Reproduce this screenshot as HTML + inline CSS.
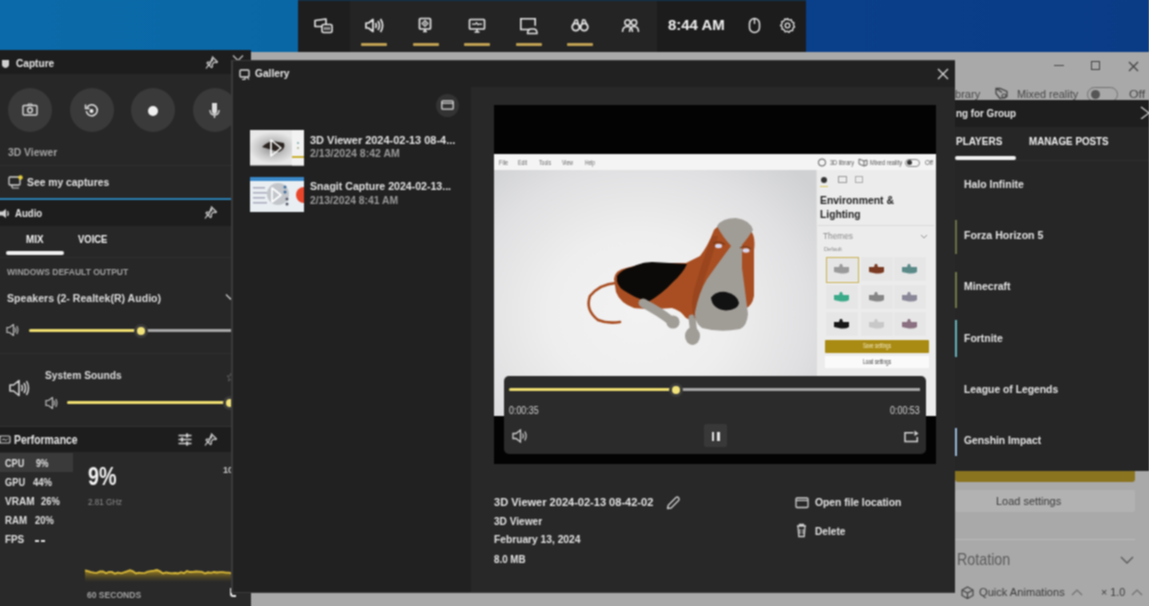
<!DOCTYPE html>
<html><head><meta charset="utf-8"><style>
html,body{margin:0;padding:0;}
body{width:1149px;height:606px;overflow:hidden;position:relative;background:#a9a9a9;font-family:"Liberation Sans",sans-serif;}
.r{position:absolute;}
.t{position:absolute;white-space:nowrap;line-height:1;transform-origin:0 0;}
#root{position:absolute;left:0;top:0;width:1149px;height:606px;filter:url(#bl);}
</style></head><body><svg width="0" height="0" style="position:absolute"><filter id="bl" x="0" y="0" width="100%" height="100%"><feConvolveMatrix order="3" kernelMatrix="1 2 1 2 4 2 1 2 1" edgeMode="duplicate" color-interpolation-filters="sRGB"/></filter></svg><div id="root">
<div class="r" style="left:0px;top:0px;width:1149px;height:52px;background:linear-gradient(90deg,#0b6aa9 0%,#0a67a6 26%,#0a3f8a 70%,#0a3c86 100%);"></div>
<div class="r" style="left:248px;top:52px;width:901px;height:554px;background:#a9a9a9;"></div>
<div class="r" style="left:248px;top:585px;width:3px;height:21px;background:#3f8c9c;"></div>
<div class="r" style="left:1053.5px;top:65.3px;width:10px;height:1.2px;background:#484848;"></div>
<div class="r" style="left:1091px;top:61.3px;width:9px;height:9px;background:transparent;border:1.2px solid #444;box-sizing:border-box;"></div>
<svg class="r" style="left:1127.5px;top:60.5px;" width="11" height="11" viewBox="0 0 11 11"><path d="M1 1L10 10M10 1L1 10" stroke="#404040" stroke-width="1.2"/></svg>
<div class="t" style="left:955.40px;top:90.04px;font-size:10.47px;font-weight:400;color:#464646;transform:scaleX(1.057)">brary</div>
<svg class="r" style="left:994px;top:87px;" width="16" height="14" viewBox="0 0 16 14"><path d="M2 1.5l6 4M2 1.5v5l4 5 7-2v-5l-7-3z" fill="none" stroke="#444" stroke-width="1.3"/><circle cx="10" cy="9" r="2" fill="none" stroke="#444" stroke-width="1.1"/></svg>
<div class="t" style="left:1017.10px;top:89.43px;font-size:11.19px;font-weight:400;color:#464646;transform:scaleX(0.974)">Mixed reality</div>
<div class="r" style="left:1087px;top:87px;width:31px;height:15px;background:transparent;border:1.3px solid #707070;border-radius:8px;box-sizing:border-box;"></div>
<div class="r" style="left:1091px;top:90px;width:9px;height:9px;background:#555;border-radius:50%;"></div>
<div class="t" style="left:1128.90px;top:89.43px;font-size:11.19px;font-weight:400;color:#464646;transform:scaleX(1.100)">Off</div>
<div class="r" style="left:298px;top:0px;width:508px;height:52px;background:#242424;"></div>
<div class="r" style="left:298px;top:0px;width:52px;height:52px;background:#1e1e1e;"></div>
<div class="r" style="left:657px;top:0px;width:149px;height:52px;background:#1c1c1c;"></div>
<div class="r" style="left:298px;top:0px;width:508px;height:1px;background:#13304a;"></div>
<div class="r" style="left:361.3px;top:43px;width:26px;height:3px;background:#bfa052;border-radius:1px;"></div>
<div class="r" style="left:412.5px;top:43px;width:26px;height:3px;background:#bfa052;border-radius:1px;"></div>
<div class="r" style="left:464px;top:43px;width:26px;height:3px;background:#bfa052;border-radius:1px;"></div>
<div class="r" style="left:515.6px;top:43px;width:26px;height:3px;background:#bfa052;border-radius:1px;"></div>
<div class="r" style="left:567px;top:43px;width:26px;height:3px;background:#bfa052;border-radius:1px;"></div>
<svg class="r" style="left:313px;top:17px;" width="21" height="18" viewBox="0 0 21 18"><path d="M2 3.5l11-1.5v7.5H2z" fill="none" stroke="#e4e4e4" stroke-width="1.6" stroke-linejoin="round"/><rect x="9" y="7.5" width="10" height="8" rx="1.5" fill="#1e1e1e" stroke="#e4e4e4" stroke-width="1.6"/><path d="M11.8 10v3M14 10v3M16.2 10v3" stroke="#e4e4e4" stroke-width="1.2"/></svg>
<svg class="r" style="left:364px;top:17px;" width="21" height="17" viewBox="0 0 21 17"><path d="M2 6h2.5l4.5-3.5v12L4.5 11H2z" fill="none" stroke="#e4e4e4" stroke-width="1.7" stroke-linejoin="round"/><path d="M11.5 6q1.5 2.5 0 5M14 4q2.8 4.5 0 9M16.5 2q4.2 6.5 0 13" fill="none" stroke="#e4e4e4" stroke-width="1.7"/></svg>
<svg class="r" style="left:418px;top:17px;" width="15" height="16" viewBox="0 0 15 16"><rect x="1.5" y="1.5" width="11" height="10.5" rx="1" fill="none" stroke="#e4e4e4" stroke-width="1.7"/><path d="M7 3.5l3 3-3 3-3-3z" fill="none" stroke="#e4e4e4" stroke-width="1.1"/><circle cx="7" cy="6.5" r="1" fill="#e4e4e4"/><path d="M5 14.5h4M7 12v2.5" stroke="#e4e4e4" stroke-width="1.6"/></svg>
<svg class="r" style="left:468px;top:18px;" width="18" height="15" viewBox="0 0 18 15"><rect x="1.5" y="1.5" width="15" height="9.5" rx="0.8" fill="none" stroke="#e4e4e4" stroke-width="1.6"/><path d="M4 6.2h3.5l1-1.5 1.5 2 1-0.5h3" fill="none" stroke="#e4e4e4" stroke-width="1.2"/><path d="M6.5 14h5M9 11v3" stroke="#e4e4e4" stroke-width="1.5"/></svg>
<svg class="r" style="left:519px;top:17px;" width="19" height="18" viewBox="0 0 19 18"><path d="M11 12.5H1.8V1.8h14.4v7" fill="none" stroke="#e4e4e4" stroke-width="1.6"/><path d="M8.5 16.5q0-4.5 4-4.5h2q3.5 0 3.5 4.5z" fill="none" stroke="#e4e4e4" stroke-width="1.5"/></svg>
<svg class="r" style="left:571px;top:18px;" width="18" height="14" viewBox="0 0 18 14"><circle cx="4.8" cy="9" r="3.6" fill="none" stroke="#e4e4e4" stroke-width="1.8"/><circle cx="13.2" cy="9" r="3.6" fill="none" stroke="#e4e4e4" stroke-width="1.8"/><path d="M1.8 7.5l2.5-5.5h2l1 5M16.2 7.5l-2.5-5.5h-2l-1 5M7.5 8.5h3" fill="none" stroke="#e4e4e4" stroke-width="1.5"/></svg>
<svg class="r" style="left:621px;top:18px;" width="19" height="15" viewBox="0 0 19 15"><circle cx="6.5" cy="4.5" r="2.7" fill="none" stroke="#e4e4e4" stroke-width="1.5"/><circle cx="13" cy="4.5" r="2.7" fill="none" stroke="#e4e4e4" stroke-width="1.5"/><path d="M1.5 14q0-5.5 5-5.5t5 5.5M8.5 14q0-5.5 4.5-5.5t4.5 5.5" fill="none" stroke="#e4e4e4" stroke-width="1.5"/></svg>
<div class="t" style="left:668.20px;top:17.95px;font-size:14.83px;font-weight:700;color:#f0f0f0;transform:scaleX(1.009)">8:44 AM</div>
<svg class="r" style="left:748px;top:17px;" width="13" height="17" viewBox="0 0 13 17"><rect x="1.5" y="1.5" width="10" height="14" rx="5" fill="none" stroke="#e4e4e4" stroke-width="1.5"/><path d="M6.5 2v5" stroke="#e4e4e4" stroke-width="1.3"/></svg>
<svg class="r" style="left:779px;top:17px;" width="17" height="17" viewBox="0 0 17 17"><path d="M8.5 1.5l1.6 1.6 2.2-.4.6 2.2 2.1.9-.6 2.2 1.2 1.9-1.8 1.3-.1 2.3-2.3.1-1.3 1.8-1.9-1.2-2.2.6-.9-2.1-2.2-.6.4-2.2L1.5 8.5l1.6-1.6-.4-2.2 2.2-.6.9-2.1 2.2.6z" fill="none" stroke="#e4e4e4" stroke-width="1.3" stroke-linejoin="round"/><circle cx="8.5" cy="8.5" r="2.3" fill="none" stroke="#e4e4e4" stroke-width="1.3"/></svg>
<div class="r" style="left:0px;top:50px;width:251px;height:24px;background:#1d1d1d;"></div>
<div class="r" style="left:0px;top:74px;width:251px;height:125px;background:#272727;"></div>
<svg class="r" style="left:1px;top:58.5px;" width="9" height="9" viewBox="0 0 9 9"><path d="M1 1h7v4.5q0 2.5-3.5 3.5q-3.5-1-3.5-3.5z" fill="#cfcfcf"/></svg>
<div class="t" style="left:16.00px;top:56.76px;font-size:11.63px;font-weight:700;color:#e6e6e6;transform:scaleX(0.870)">Capture</div>
<svg class="r" style="left:205px;top:55px;" width="14" height="15" viewBox="0 0 14 15"><path d="M7 1.5l5.5 5.5-1.2.6-1.8-.6-2.3 2.3.3 2.4-1 1-2.8-2.8L1 13.5M4.5 10.5L2 8l1-1 2.4.3L7.7 5 7.1 3.2z" fill="none" stroke="#cfcfcf" stroke-width="1.2" stroke-linejoin="round"/></svg>
<svg class="r" style="left:232px;top:54px;" width="12" height="9" viewBox="0 0 12 9"><path d="M1 1.5l5 5 5-5" fill="none" stroke="#bbb" stroke-width="1.3"/></svg>
<div class="r" style="left:8px;top:88px;width:44px;height:44px;background:#3a3a3a;border-radius:50%;"></div>
<div class="r" style="left:69.5px;top:88px;width:44px;height:44px;background:#3a3a3a;border-radius:50%;"></div>
<div class="r" style="left:131px;top:88px;width:44px;height:44px;background:#3a3a3a;border-radius:50%;"></div>
<div class="r" style="left:193px;top:88px;width:44px;height:44px;background:#3a3a3a;border-radius:50%;"></div>
<svg class="r" style="left:22px;top:103px;" width="16" height="13" viewBox="0 0 16 13"><rect x="1" y="2.5" width="14" height="9.5" rx="1" fill="none" stroke="#d8d8d8" stroke-width="1.4"/><circle cx="8" cy="7.2" r="2.4" fill="none" stroke="#d8d8d8" stroke-width="1.4"/><path d="M5.5 2.5l1-1.5h3l1 1.5" fill="none" stroke="#d8d8d8" stroke-width="1.2"/></svg>
<svg class="r" style="left:84px;top:103px;" width="15" height="15" viewBox="0 0 15 15"><path d="M3 4.5A5.5 5.5 0 1 1 2.3 8" fill="none" stroke="#e0e0e0" stroke-width="1.5"/><path d="M1.5 1.5v4h4" fill="none" stroke="#e0e0e0" stroke-width="1.4"/><circle cx="7.5" cy="8" r="2" fill="#eee"/></svg>
<div class="r" style="left:148px;top:105.5px;width:10px;height:10px;background:#f0f0f0;border-radius:50%;"></div>
<svg class="r" style="left:208px;top:101px;" width="13" height="18" viewBox="0 0 13 18"><path d="M4 2h5v8q0 3-2.5 3T4 10z" fill="#dcdcdc"/><path d="M2 9q0 5 4.5 5T11 9M6.5 14v3" fill="none" stroke="#dcdcdc" stroke-width="1.3"/></svg>
<div class="t" style="left:7.70px;top:148.44px;font-size:10.47px;font-weight:700;color:#a4a4a4;transform:scaleX(0.987)">3D Viewer</div>
<div class="r" style="left:0px;top:165px;width:251px;height:1px;background:#2f2f2f;"></div>
<svg class="r" style="left:8px;top:175px;" width="15" height="14" viewBox="0 0 15 14"><rect x="1" y="2" width="11" height="8" rx="1" fill="none" stroke="#d0d0d0" stroke-width="1.3"/><path d="M4 13h7M4 10v3" stroke="#d0d0d0" stroke-width="1.2"/><circle cx="12.5" cy="2.5" r="2.2" fill="#e8d040"/></svg>
<div class="t" style="left:27.10px;top:176.16px;font-size:11.63px;font-weight:700;color:#e0e0e0;transform:scaleX(0.889)">See my captures</div>
<div class="r" style="left:0px;top:197.5px;width:251px;height:2.8px;background:#2a7fb2;"></div>
<div class="r" style="left:0px;top:200px;width:251px;height:26px;background:#1d1d1d;"></div>
<div class="r" style="left:0px;top:226px;width:251px;height:201px;background:#272727;"></div>
<svg class="r" style="left:0px;top:209px;" width="11" height="9" viewBox="0 0 11 9"><path d="M0 2.5h2.5l3.5-2.5v9l-3.5-2.5H0z" fill="#cfcfcf"/><path d="M7.5 2q1.5 2.5 0 5" fill="none" stroke="#cfcfcf" stroke-width="1.3"/></svg>
<div class="t" style="left:15.30px;top:207.95px;font-size:11.05px;font-weight:700;color:#e6e6e6;transform:scaleX(0.869)">Audio</div>
<svg class="r" style="left:204px;top:205px;" width="14" height="15" viewBox="0 0 14 15"><path d="M7 1.5l5.5 5.5-1.2.6-1.8-.6-2.3 2.3.3 2.4-1 1-2.8-2.8L1 13.5M4.5 10.5L2 8l1-1 2.4.3L7.7 5 7.1 3.2z" fill="none" stroke="#cfcfcf" stroke-width="1.2" stroke-linejoin="round"/></svg>
<div class="r" style="left:232px;top:209px;width:2px;height:2px;background:#888;"></div>
<div class="r" style="left:232px;top:215px;width:2px;height:2px;background:#888;"></div>
<div class="t" style="left:25.70px;top:233.60px;font-size:11.34px;font-weight:700;color:#f2f2f2;transform:scaleX(0.868)">MIX</div>
<div class="t" style="left:78.20px;top:233.60px;font-size:11.34px;font-weight:700;color:#f2f2f2;transform:scaleX(0.833)">VOICE</div>
<div class="r" style="left:6px;top:251px;width:58px;height:3.5px;background:#f0f0f0;border-radius:2px;"></div>
<div class="r" style="left:0px;top:257px;width:251px;height:1px;background:#2e2e2e;"></div>
<div class="t" style="left:7.00px;top:267.73px;font-size:9.30px;font-weight:700;color:#a0a0a0;transform:scaleX(0.914)">WINDOWS DEFAULT OUTPUT</div>
<div class="t" style="left:7.40px;top:292.60px;font-size:11.34px;font-weight:700;color:#dcdcdc;transform:scaleX(0.933)">Speakers (2- Realtek(R) Audio)</div>
<svg class="r" style="left:225px;top:293px;" width="11" height="8" viewBox="0 0 11 8"><path d="M1 1.5l4.5 4.5 4.5-4.5" fill="none" stroke="#c8c8c8" stroke-width="1.3"/></svg>
<svg class="r" style="left:6px;top:324px;" width="13" height="12" viewBox="0 0 13 12"><path d="M1 3.5h2.5l4-3v11l-4-3H1z" fill="none" stroke="#bdbdbd" stroke-width="1.2"/><path d="M9 3.5q1.3 2.5 0 5M10.8 2q2.2 4 0 8" fill="none" stroke="#bdbdbd" stroke-width="1.1"/></svg>
<div class="r" style="left:29px;top:329px;width:111px;height:3px;background:#ecdc70;border-radius:1.5px;"></div>
<div class="r" style="left:141px;top:329px;width:92px;height:3px;background:#a6a6a6;"></div>
<div class="r" style="left:133.5px;top:323.5px;width:14px;height:14px;background:#3b3b3b;border-radius:50%;"></div>
<div class="r" style="left:136.5px;top:326.5px;width:8px;height:8px;background:#f2e27a;border-radius:50%;"></div>
<div class="r" style="left:0px;top:352.5px;width:251px;height:1px;background:#2f2f2f;"></div>
<svg class="r" style="left:8px;top:378px;" width="22" height="20" viewBox="0 0 22 20"><path d="M2 7h3.5l5.5-4.5v15L5.5 13H2z" fill="none" stroke="#d4d4d4" stroke-width="1.6" stroke-linejoin="round"/><path d="M13.5 7q1.8 3 0 6M16 5q3 5 0 10M18.5 3q4 7 0 14" fill="none" stroke="#d4d4d4" stroke-width="1.5"/></svg>
<div class="t" style="left:45.40px;top:370.40px;font-size:11.34px;font-weight:700;color:#dcdcdc;transform:scaleX(0.902)">System Sounds</div>
<svg class="r" style="left:45px;top:397px;" width="13" height="12" viewBox="0 0 13 12"><path d="M1 3.5h2.5l4-3v11l-4-3H1z" fill="none" stroke="#bdbdbd" stroke-width="1.2"/><path d="M9 3.5q1.3 2.5 0 5M10.8 2q2.2 4 0 8" fill="none" stroke="#bdbdbd" stroke-width="1.1"/></svg>
<div class="r" style="left:67px;top:401.3px;width:162px;height:3px;background:#ecdc70;border-radius:1.5px;"></div>
<div class="r" style="left:222.5px;top:395.5px;width:14px;height:14px;background:#3b3b3b;border-radius:50%;"></div>
<div class="r" style="left:225.5px;top:398.5px;width:8px;height:8px;background:#f2e27a;border-radius:50%;"></div>
<svg class="r" style="left:227px;top:373px;" width="8" height="9" viewBox="0 0 8 9"><path d="M4 0l1.2 3h3l-2.5 2 1 3L4 6.3 1.3 8l1-3L0 3h3z" fill="none" stroke="#666" stroke-width="0.8"/></svg>
<div class="r" style="left:0px;top:426px;width:251px;height:1px;background:#333;"></div>
<div class="r" style="left:0px;top:427px;width:251px;height:25px;background:#1d1d1d;"></div>
<div class="r" style="left:0px;top:452px;width:251px;height:154px;background:#292929;"></div>
<svg class="r" style="left:0px;top:435px;" width="11" height="10" viewBox="0 0 11 10"><rect x="0" y="1" width="10" height="7" rx="1" fill="none" stroke="#cfcfcf" stroke-width="1.2"/><path d="M2 5l2-1 2 1.5 2-2" fill="none" stroke="#cfcfcf" stroke-width="1"/></svg>
<div class="t" style="left:14.00px;top:435.01px;font-size:11.92px;font-weight:700;color:#e6e6e6;transform:scaleX(0.873)">Performance</div>
<svg class="r" style="left:178px;top:433px;" width="14" height="13" viewBox="0 0 14 13"><path d="M0.5 2.5h13M0.5 6.5h13M0.5 10.5h13" stroke="#d0d0d0" stroke-width="1.3"/><rect x="8" y="0.5" width="2.2" height="4" fill="#d0d0d0"/><rect x="3" y="4.5" width="2.2" height="4" fill="#d0d0d0"/><rect x="8" y="8.5" width="2.2" height="4" fill="#d0d0d0"/></svg>
<svg class="r" style="left:204px;top:432px;" width="14" height="15" viewBox="0 0 14 15"><path d="M7 1.5l5.5 5.5-1.2.6-1.8-.6-2.3 2.3.3 2.4-1 1-2.8-2.8L1 13.5M4.5 10.5L2 8l1-1 2.4.3L7.7 5 7.1 3.2z" fill="none" stroke="#cfcfcf" stroke-width="1.2" stroke-linejoin="round"/></svg>
<div class="r" style="left:0px;top:452.6px;width:73px;height:19px;background:#3a3a3a;"></div>
<div class="t" style="left:5.10px;top:458.64px;font-size:10.47px;font-weight:700;color:#e0e0e0;transform:scaleX(0.869)">CPU</div>
<div class="t" style="left:35.50px;top:458.64px;font-size:10.47px;font-weight:700;color:#e0e0e0;transform:scaleX(0.826)">9%</div>
<div class="t" style="left:5.10px;top:477.54px;font-size:10.47px;font-weight:700;color:#e0e0e0;transform:scaleX(0.886)">GPU</div>
<div class="t" style="left:32.70px;top:477.54px;font-size:10.47px;font-weight:700;color:#e0e0e0;transform:scaleX(0.912)">44%</div>
<div class="t" style="left:5.10px;top:496.94px;font-size:10.47px;font-weight:700;color:#e0e0e0;transform:scaleX(0.961)">VRAM</div>
<div class="t" style="left:41.20px;top:496.94px;font-size:10.47px;font-weight:700;color:#e0e0e0;transform:scaleX(0.893)">26%</div>
<div class="t" style="left:5.10px;top:515.94px;font-size:10.47px;font-weight:700;color:#e0e0e0;transform:scaleX(0.923)">RAM</div>
<div class="t" style="left:34.60px;top:515.94px;font-size:10.47px;font-weight:700;color:#e0e0e0;transform:scaleX(0.893)">20%</div>
<div class="t" style="left:5.10px;top:534.94px;font-size:10.47px;font-weight:700;color:#e0e0e0;transform:scaleX(0.943)">FPS</div>
<div class="r" style="left:35px;top:540.2px;width:4px;height:1.6px;background:#e0e0e0;"></div>
<div class="r" style="left:41px;top:540.2px;width:4px;height:1.6px;background:#e0e0e0;"></div>
<div class="t" style="left:87.70px;top:463.01px;font-size:26.45px;font-weight:700;color:#f2f2f2;transform:scaleX(0.748)">9%</div>
<div class="t" style="left:87.60px;top:496.83px;font-size:9.88px;font-weight:400;color:#8e8e8e;transform:scaleX(0.819)">2.81 GHz</div>
<div class="t" style="left:223.40px;top:464.86px;font-size:9.74px;font-weight:700;color:#c8c8c8;transform:scaleX(0.936)">100</div>
<div class="t" style="left:86.90px;top:589.90px;font-size:9.45px;font-weight:700;color:#a2a2a2;transform:scaleX(0.905)">60 SECONDS</div>
<svg class="r" style="left:0px;top:0px;" width="251" height="606" viewBox="0 0 251 606"><defs><linearGradient id="pg" x1="0" y1="0" x2="0" y2="1"><stop offset="0" stop-color="#a88a20" stop-opacity="0.95"/><stop offset="1" stop-color="#6a5a20" stop-opacity="0"/></linearGradient></defs><path d="M85.0 570.4 L88.0 571.1 L91.0 572.2 L94.0 572.7 L97.0 572.8 L100.0 571.5 L103.0 571.3 L106.0 573.3 L109.0 571.9 L112.0 571.9 L115.0 573.7 L118.0 572.4 L121.0 573.3 L124.0 572.4 L127.0 571.3 L130.0 570.2 L133.0 571.3 L136.0 573.4 L139.0 572.6 L142.0 573.1 L145.0 572.9 L148.0 571.5 L151.0 571.1 L154.0 570.7 L157.0 570.0 L160.0 571.4 L163.0 573.4 L166.0 572.4 L169.0 573.0 L172.0 573.4 L175.0 573.0 L178.0 573.5 L181.0 572.2 L184.0 573.2 L187.0 570.9 L190.0 572.0 L193.0 571.9 L196.0 571.5 L199.0 571.6 L202.0 571.8 L205.0 573.6 L208.0 572.3 L211.0 572.8 L214.0 572.0 L217.0 572.5 L220.0 572.2 L223.0 572.1 L226.0 572.7 L229.0 572.7 L232.0 573.5 L234 582 L85 582 Z" fill="url(#pg)"/><path d="M85.0 570.4 L88.0 571.1 L91.0 572.2 L94.0 572.7 L97.0 572.8 L100.0 571.5 L103.0 571.3 L106.0 573.3 L109.0 571.9 L112.0 571.9 L115.0 573.7 L118.0 572.4 L121.0 573.3 L124.0 572.4 L127.0 571.3 L130.0 570.2 L133.0 571.3 L136.0 573.4 L139.0 572.6 L142.0 573.1 L145.0 572.9 L148.0 571.5 L151.0 571.1 L154.0 570.7 L157.0 570.0 L160.0 571.4 L163.0 573.4 L166.0 572.4 L169.0 573.0 L172.0 573.4 L175.0 573.0 L178.0 573.5 L181.0 572.2 L184.0 573.2 L187.0 570.9 L190.0 572.0 L193.0 571.9 L196.0 571.5 L199.0 571.6 L202.0 571.8 L205.0 573.6 L208.0 572.3 L211.0 572.8 L214.0 572.0 L217.0 572.5 L220.0 572.2 L223.0 572.1 L226.0 572.7 L229.0 572.7 L232.0 573.5" fill="none" stroke="#d8b838" stroke-width="1.8"/></svg>
<svg class="r" style="left:229px;top:587px;" width="8" height="11" viewBox="0 0 8 11"><path d="M2 1v6q0 2 2 2h3" fill="none" stroke="#e8e8e8" stroke-width="2"/></svg>
<div class="r" style="left:233px;top:60.5px;width:722px;height:531.5px;background:#212121;box-shadow:-1px 0 0 1px #3a3a3a;"></div>
<div class="r" style="left:471px;top:86.5px;width:484px;height:505.5px;background:#282828;"></div>
<svg class="r" style="left:239px;top:69px;" width="11" height="11" viewBox="0 0 11 11"><rect x="1" y="1" width="9" height="7" rx="1" fill="none" stroke="#d8d8d8" stroke-width="1.4"/><path d="M3 10.5h3M6 8v3M8 8l2 2.5" stroke="#d8d8d8" stroke-width="1.2"/></svg>
<div class="t" style="left:255.10px;top:68.45px;font-size:11.05px;font-weight:700;color:#e6e6e6;transform:scaleX(0.921)">Gallery</div>
<svg class="r" style="left:937px;top:68px;" width="12" height="12" viewBox="0 0 12 12"><path d="M1 1L11 11M11 1L1 11" stroke="#d8d8d8" stroke-width="1.3"/></svg>
<div class="r" style="left:436px;top:94px;width:23px;height:23px;background:#333333;border-radius:50%;"></div>
<svg class="r" style="left:441px;top:100px;" width="13" height="10" viewBox="0 0 13 10"><rect x="0.8" y="0.8" width="11.4" height="8.4" rx="1" fill="none" stroke="#d8d8d8" stroke-width="1.3"/><path d="M1 3.2h11" stroke="#d8d8d8" stroke-width="1.2"/></svg>
<svg class="r" style="left:249.5px;top:130px;" width="54.5" height="35.5" viewBox="0 0 54.5 35.5"><defs><radialGradient id="tg1" cx="0.42" cy="0.5" r="0.45"><stop offset="0" stop-color="#8a8a8a"/><stop offset="0.6" stop-color="#c8c8c8"/><stop offset="1" stop-color="#e8e8e8"/></radialGradient></defs><rect width="54.5" height="35.5" fill="url(#tg1)"/><rect x="42" y="0" width="12.5" height="35.5" fill="#f2f2f2"/><rect x="42" y="26" width="12.5" height="2" fill="#c8b030"/><path d="M12 17q8-8 16-5l6 1q2 6-5 9z" fill="#2a2320"/><path d="M21 10l10 8-10 8z" fill="none" stroke="#fff" stroke-width="1.6" stroke-linejoin="round"/><circle cx="48" cy="13" r="1" fill="#7aa"/><circle cx="48" cy="18" r="1" fill="#aa8"/></svg>
<svg class="r" style="left:249.5px;top:177px;" width="54.5" height="35" viewBox="0 0 54.5 35"><rect width="54.5" height="35" fill="#e8eef2"/><rect width="54.5" height="4" fill="#3a88c8"/><rect x="3" y="10" width="12" height="1.5" fill="#aab"/><rect x="3" y="15" width="14" height="1.5" fill="#aab"/><rect x="3" y="20" width="12" height="1.5" fill="#aab"/><rect x="3" y="25" width="14" height="1.5" fill="#aab"/><circle cx="28" cy="17" r="11" fill="#a8acb0" opacity="0.6"/><circle cx="35" cy="10" r="1.5" fill="#3a6a9a"/><circle cx="35" cy="15" r="1.5" fill="#3a6a9a"/><circle cx="37" cy="22" r="1.5" fill="#556"/><circle cx="37" cy="27" r="1.5" fill="#556"/><circle cx="54" cy="18" r="8" fill="#e8452a"/><path d="M22 11l9 7-9 7z" fill="none" stroke="#fff" stroke-width="1.6" stroke-linejoin="round"/></svg>
<div class="t" style="left:310.40px;top:135.64px;font-size:10.47px;font-weight:700;color:#e2e2e2;transform:scaleX(1.046)">3D Viewer 2024-02-13 08-4...</div>
<div class="t" style="left:310.40px;top:148.69px;font-size:10.17px;font-weight:700;color:#9a9a9a;transform:scaleX(1.037)">2/13/2024 8:42 AM</div>
<div class="t" style="left:310.40px;top:182.44px;font-size:10.47px;font-weight:700;color:#e2e2e2;transform:scaleX(1.010)">Snagit Capture 2024-02-13...</div>
<div class="t" style="left:310.40px;top:195.79px;font-size:10.17px;font-weight:700;color:#9a9a9a;transform:scaleX(1.017)">2/13/2024 8:41 AM</div>
<div class="r" style="left:493.5px;top:105px;width:442px;height:359px;background:#030303;"></div>
<div class="r" style="left:493.5px;top:154.2px;width:442px;height:262.2px;background:#f4f4f4;"></div>
<div class="r" style="left:493.5px;top:170.3px;width:322.5px;height:246.1px;background:radial-gradient(ellipse 70% 80% at 45% 58%,#f2f2f2 0%,#eeeeee 40%,#e0e0e2 75%,#d0d1d3 100%);"></div>
<div class="r" style="left:816px;top:170.3px;width:119.5px;height:246.1px;background:#ececec;"></div>
<div class="r" style="left:816px;top:170.3px;width:1px;height:246.1px;background:#dcdcdc;"></div>
<div class="t" style="left:498.60px;top:159.54px;font-size:6.69px;font-weight:400;color:#666;transform:scaleX(0.835)">File</div>
<div class="t" style="left:518.00px;top:159.54px;font-size:6.69px;font-weight:400;color:#666;transform:scaleX(0.781)">Edit</div>
<div class="t" style="left:539.00px;top:159.54px;font-size:6.69px;font-weight:400;color:#666;transform:scaleX(0.769)">Tools</div>
<div class="t" style="left:562.00px;top:159.54px;font-size:6.69px;font-weight:400;color:#666;transform:scaleX(0.765)">View</div>
<div class="t" style="left:585.00px;top:159.54px;font-size:6.69px;font-weight:400;color:#666;transform:scaleX(0.727)">Help</div>
<svg class="r" style="left:817px;top:158px;" width="10" height="9" viewBox="0 0 10 9"><circle cx="5" cy="4.5" r="3.6" fill="none" stroke="#555" stroke-width="1"/></svg>
<div class="t" style="left:830.00px;top:159.79px;font-size:6.40px;font-weight:400;color:#555;transform:scaleX(0.877)">3D library</div>
<svg class="r" style="left:858px;top:158px;" width="10" height="9" viewBox="0 0 10 9"><path d="M1 1l5 2v5l-5-2z M6 3l3-1v5l-3 1" fill="none" stroke="#555" stroke-width="0.9"/></svg>
<div class="t" style="left:870.00px;top:159.79px;font-size:6.40px;font-weight:400;color:#555;transform:scaleX(0.892)">Mixed reality</div>
<div class="r" style="left:905px;top:158.5px;width:15px;height:8px;background:transparent;border:1px solid #888;border-radius:4px;box-sizing:border-box;"></div>
<div class="r" style="left:907px;top:160px;width:5px;height:5px;background:#333;border-radius:50%;"></div>
<div class="t" style="left:925.00px;top:159.79px;font-size:6.40px;font-weight:400;color:#555;transform:scaleX(0.951)">Off</div>
<div class="r" style="left:821px;top:176.5px;width:6px;height:6px;background:#333;border-radius:50%;"></div>
<div class="r" style="left:837.5px;top:176px;width:9px;height:7px;background:transparent;border:1px solid #999;box-sizing:border-box;"></div>
<div class="r" style="left:855px;top:176px;width:8px;height:7px;background:transparent;border:1px solid #aaa;box-sizing:border-box;"></div>
<div class="r" style="left:820px;top:185.5px;width:8px;height:1.4px;background:#d8c860;"></div>
<div class="t" style="left:820.40px;top:194.95px;font-size:11.05px;font-weight:700;color:#1e1e1e;transform:scaleX(0.941)">Environment &amp;</div>
<div class="t" style="left:820.40px;top:209.45px;font-size:11.05px;font-weight:700;color:#1e1e1e;transform:scaleX(0.930)">Lighting</div>
<div class="r" style="left:818px;top:225px;width:116px;height:1px;background:#dadada;"></div>
<div class="t" style="left:823.00px;top:232.16px;font-size:8.43px;font-weight:400;color:#8a8a8a;transform:scaleX(0.985)">Themes</div>
<svg class="r" style="left:920px;top:234px;" width="8" height="5" viewBox="0 0 8 5"><path d="M1 1l3 3 3-3" fill="none" stroke="#888" stroke-width="0.9"/></svg>
<div class="t" style="left:824.00px;top:246.88px;font-size:5.81px;font-weight:400;color:#8a8a8a;transform:scaleX(0.977)">Default</div>
<div class="r" style="left:826px;top:257px;width:32px;height:24px;background:#e6e6e6;"></div>
<svg class="r" style="left:833px;top:263px;" width="18" height="11" viewBox="0 0 18 11"><path d="M1 4h5l1-3h2l1 3h6v5q-3 2-8 1.5L1 9z" fill="#9a9a9a"/></svg>
<div class="r" style="left:860.5px;top:257px;width:32px;height:24px;background:#e6e6e6;"></div>
<svg class="r" style="left:867.5px;top:263px;" width="18" height="11" viewBox="0 0 18 11"><path d="M1 4h5l1-3h2l1 3h6v5q-3 2-8 1.5L1 9z" fill="#7a3a22"/></svg>
<div class="r" style="left:893.5px;top:257px;width:32px;height:24px;background:#e6e6e6;"></div>
<svg class="r" style="left:900.5px;top:263px;" width="18" height="11" viewBox="0 0 18 11"><path d="M1 4h5l1-3h2l1 3h6v5q-3 2-8 1.5L1 9z" fill="#5a8a88"/></svg>
<div class="r" style="left:826px;top:285px;width:32px;height:24px;background:#e6e6e6;"></div>
<svg class="r" style="left:833px;top:291px;" width="18" height="11" viewBox="0 0 18 11"><path d="M1 4h5l1-3h2l1 3h6v5q-3 2-8 1.5L1 9z" fill="#3aaa88"/></svg>
<div class="r" style="left:860.5px;top:285px;width:32px;height:24px;background:#e6e6e6;"></div>
<svg class="r" style="left:867.5px;top:291px;" width="18" height="11" viewBox="0 0 18 11"><path d="M1 4h5l1-3h2l1 3h6v5q-3 2-8 1.5L1 9z" fill="#858585"/></svg>
<div class="r" style="left:893.5px;top:285px;width:32px;height:24px;background:#e6e6e6;"></div>
<svg class="r" style="left:900.5px;top:291px;" width="18" height="11" viewBox="0 0 18 11"><path d="M1 4h5l1-3h2l1 3h6v5q-3 2-8 1.5L1 9z" fill="#8a8898"/></svg>
<div class="r" style="left:826px;top:312px;width:32px;height:24px;background:#e6e6e6;"></div>
<svg class="r" style="left:833px;top:318px;" width="18" height="11" viewBox="0 0 18 11"><path d="M1 4h5l1-3h2l1 3h6v5q-3 2-8 1.5L1 9z" fill="#181818"/></svg>
<div class="r" style="left:860.5px;top:312px;width:32px;height:24px;background:#e6e6e6;"></div>
<svg class="r" style="left:867.5px;top:318px;" width="18" height="11" viewBox="0 0 18 11"><path d="M1 4h5l1-3h2l1 3h6v5q-3 2-8 1.5L1 9z" fill="#c8c8c8"/></svg>
<div class="r" style="left:893.5px;top:312px;width:32px;height:24px;background:#e6e6e6;"></div>
<svg class="r" style="left:900.5px;top:318px;" width="18" height="11" viewBox="0 0 18 11"><path d="M1 4h5l1-3h2l1 3h6v5q-3 2-8 1.5L1 9z" fill="#8a7080"/></svg>
<div class="r" style="left:826px;top:256.5px;width:32.5px;height:26px;background:transparent;border:1.4px solid #c8b050;box-sizing:border-box;"></div>
<div class="r" style="left:824.7px;top:340px;width:104px;height:12.6px;background:#a98a12;border-radius:1px;"></div>
<div class="t" style="left:862.70px;top:342.99px;font-size:6.40px;font-weight:400;color:#f0e8c0;transform:scaleX(0.729)">Save settings</div>
<div class="r" style="left:824.7px;top:356.2px;width:104px;height:11.8px;background:#fafafa;"></div>
<div class="t" style="left:862.70px;top:358.79px;font-size:6.40px;font-weight:400;color:#444;transform:scaleX(0.736)">Load settings</div>
<svg class="r" style="left:0px;top:0px;" width="1149" height="606" viewBox="0 0 1149 606">
<path d="M616 283 Q600 284 590 296 Q585 310 598 320 Q608 324 620 322" fill="none" stroke="#a84e22" stroke-width="2.6" stroke-linecap="round"/>
<path d="M614 279 Q615 270 626 268 L646 263 L686 263 L700 256 Q708 246 714 230 Q717 226 722 226 L750 230 Q756 236 754 250 L754 296 Q752 306 746 308 L700 318 Q692 322 686 318 Q680 310 672 308 Q650 310 634 308 Q620 303 616 292 Z" fill="#a84e22"/>
<path d="M617 276 Q622 269 632 267 Q642 262 652 262 L687 264 Q683 273 673 282 Q662 294 648 302 Q636 298 628 293 Q618 288 617 281 Z" fill="#0c0a08"/>
<path d="M643 303 Q660 312 670 320" stroke="#a09c96" stroke-width="9" stroke-linecap="round" fill="none"/>
<circle cx="673" cy="322" r="6.6" fill="#a09c96"/>
<path d="M692 318 L694 334" stroke="#a09c96" stroke-width="7" stroke-linecap="round" fill="none"/>
<ellipse cx="692.5" cy="336" rx="7.5" ry="9" fill="#a09c96"/>
<path d="M712 236 Q702 262 694 290 Q690 305 694 318 L700 318 Q698 300 704 280 Q712 258 718 236 Z" fill="#8a3c18" opacity="0.45"/>
<path d="M717 226 Q722 218 736 218 Q750 220 753 230 Q748 238 742 245 L742 268 Q745 290 748 314 Q747 326 740 329 Q720 333 702 328 Q694 322 695 312 Q699 292 707 279 Q719 262 731 246 Q722 236 717 226 Z" fill="#a09c96"/>
<path d="M711 297.5 Q716 291 726 292 Q738 295 739 303 Q738 310 726 310.5 Q712 309 711 297.5 Z" fill="#121212"/>
<ellipse cx="718.5" cy="246" rx="3.5" ry="2.2" fill="#d8d8f0"/>
<ellipse cx="746" cy="250.5" rx="3.5" ry="2.2" fill="#d8d8f0"/>
<path d="M713 243.5 Q719 240 725 244.5" fill="none" stroke="#7a3a18" stroke-width="1.3"/>
<path d="M740 248 Q746 245 751 249" fill="none" stroke="#7a3a18" stroke-width="1.3"/>
</svg>
<div class="r" style="left:504px;top:375.5px;width:422px;height:78px;background:#2b2b2b;border-radius:5px;"></div>
<div class="r" style="left:509px;top:388.3px;width:167px;height:3px;background:#ecdc70;border-radius:1.5px;"></div>
<div class="r" style="left:676px;top:388.3px;width:244px;height:3px;background:#a6a6a6;"></div>
<div class="r" style="left:668.5px;top:382.5px;width:14.5px;height:14.5px;background:#3b3b3b;border-radius:50%;"></div>
<div class="r" style="left:671.7px;top:385.7px;width:8px;height:8px;background:#f2e27a;border-radius:50%;"></div>
<div class="t" style="left:509.40px;top:405.56px;font-size:10.32px;font-weight:400;color:#d4d4d4;transform:scaleX(0.860)">0:00:35</div>
<div class="t" style="left:889.80px;top:405.56px;font-size:10.32px;font-weight:400;color:#d4d4d4;transform:scaleX(0.866)">0:00:53</div>
<svg class="r" style="left:512px;top:429px;" width="16" height="14" viewBox="0 0 16 14"><path d="M1 4.5h3l4.5-3.5v12l-4.5-3.5H1z" fill="none" stroke="#cfcfcf" stroke-width="1.3"/><path d="M10.5 4.5q1.6 2.5 0 5M12.8 2.5q2.6 4.5 0 9" fill="none" stroke="#cfcfcf" stroke-width="1.2"/></svg>
<div class="r" style="left:704.4px;top:424px;width:22.6px;height:23px;background:#383838;border-radius:2px;"></div>
<div class="r" style="left:711.5px;top:431.5px;width:2.5px;height:9.5px;background:#e0e0e0;"></div>
<div class="r" style="left:717px;top:431.5px;width:2.5px;height:9.5px;background:#e0e0e0;"></div>
<svg class="r" style="left:903px;top:429px;" width="17" height="14" viewBox="0 0 17 14"><path d="M10.5 3.7H2v8.8h12.3V8" fill="none" stroke="#d4d4d4" stroke-width="1.5"/><path d="M11.5 1.5l4 3-4 2.5z" fill="#d4d4d4"/></svg>
<div class="t" style="left:494.00px;top:497.74px;font-size:10.47px;font-weight:700;color:#e2e2e2;transform:scaleX(1.054)">3D Viewer 2024-02-13 08-42-02</div>
<svg class="r" style="left:665px;top:495px;" width="16" height="15" viewBox="0 0 16 15"><path d="M2.5 13.5l0.8-3.3 7.7-7.7q1.3-1 2.5 0.3t0.3 2.5l-7.7 7.7z" fill="none" stroke="#cacaca" stroke-width="1.4" stroke-linejoin="round"/></svg>
<div class="t" style="left:494.00px;top:517.19px;font-size:10.17px;font-weight:700;color:#e2e2e2;transform:scaleX(0.995)">3D Viewer</div>
<div class="t" style="left:494.00px;top:535.04px;font-size:10.47px;font-weight:700;color:#e2e2e2;transform:scaleX(0.977)">February 13, 2024</div>
<div class="t" style="left:494.00px;top:553.70px;font-size:10.76px;font-weight:700;color:#e2e2e2;transform:scaleX(0.912)">8.0 MB</div>
<svg class="r" style="left:795px;top:497px;" width="14" height="12" viewBox="0 0 14 12"><rect x="1" y="1" width="12" height="9.5" rx="1" fill="none" stroke="#cfcfcf" stroke-width="1.3"/><path d="M1 3.5h12" stroke="#cfcfcf" stroke-width="1.2"/></svg>
<div class="t" style="left:814.90px;top:497.74px;font-size:10.47px;font-weight:700;color:#e2e2e2;transform:scaleX(0.982)">Open file location</div>
<svg class="r" style="left:796px;top:523px;" width="11" height="15" viewBox="0 0 11 15"><path d="M1 3h9M3.5 3V1.5h4V3M2 3l.8 10.5h5.4L9 3" fill="none" stroke="#cfcfcf" stroke-width="1.3"/><path d="M4 6v5M7 6v5" stroke="#cfcfcf" stroke-width="1"/></svg>
<div class="t" style="left:814.90px;top:527.04px;font-size:10.47px;font-weight:700;color:#e2e2e2;transform:scaleX(0.971)">Delete</div>
<div class="r" style="left:955px;top:462px;width:180px;height:19.6px;background:#8a7420;border-radius:3px;"></div>
<div class="r" style="left:955px;top:490px;width:180px;height:22px;background:#b2b2b2;border-radius:2px;"></div>
<div class="t" style="left:996.40px;top:496.43px;font-size:11.19px;font-weight:400;color:#3a3a3a;transform:scaleX(0.979)">Load settings</div>
<div class="r" style="left:955px;top:539px;width:180px;height:1px;background:#b8b8b8;"></div>
<div class="t" style="left:957.40px;top:551.20px;font-size:17.01px;font-weight:400;color:#5a5a5a;transform:scaleX(0.840)">Rotation</div>
<svg class="r" style="left:1120px;top:556px;" width="14" height="8" viewBox="0 0 14 8"><path d="M1 1l6 6 6-6" fill="none" stroke="#5a5a5a" stroke-width="1.4"/></svg>
<svg class="r" style="left:960px;top:586px;" width="15" height="13" viewBox="0 0 15 13"><path d="M7.5 1l5.5 3v5.5l-5.5 3-5.5-3V4z M2 4l5.5 3 5.5-3M7.5 7v5.5" fill="none" stroke="#444" stroke-width="1.2"/></svg>
<div class="t" style="left:979.40px;top:586.60px;font-size:11.34px;font-weight:400;color:#3c3c3c;transform:scaleX(0.980)">Quick Animations</div>
<svg class="r" style="left:1071px;top:589px;" width="12" height="7" viewBox="0 0 12 7"><path d="M1 6l5-5 5 5" fill="none" stroke="#707070" stroke-width="1.2"/></svg>
<div class="t" style="left:1101.40px;top:586.60px;font-size:11.34px;font-weight:400;color:#3c3c3c;transform:scaleX(0.948)">× 1.0</div>
<svg class="r" style="left:1131px;top:589px;" width="12" height="7" viewBox="0 0 12 7"><path d="M1 6l5-5 5 5" fill="none" stroke="#707070" stroke-width="1.2"/></svg>
<div class="r" style="left:955px;top:100px;width:194px;height:26.5px;background:#1e1e1e;"></div>
<div class="r" style="left:955px;top:126.5px;width:194px;height:344.5px;background:#262626;"></div>
<div class="t" style="left:956.40px;top:107.65px;font-size:11.05px;font-weight:700;color:#e6e6e6;transform:scaleX(0.888)">ng for Group</div>
<svg class="r" style="left:1140px;top:106px;" width="10" height="13" viewBox="0 0 10 13"><path d="M1 1l8 6-8 6" fill="none" stroke="#cfcfcf" stroke-width="1.3"/></svg>
<div class="t" style="left:955.80px;top:136.10px;font-size:11.34px;font-weight:700;color:#f0f0f0;transform:scaleX(0.884)">PLAYERS</div>
<div class="t" style="left:1028.70px;top:136.10px;font-size:11.34px;font-weight:700;color:#f0f0f0;transform:scaleX(0.867)">MANAGE POSTS</div>
<div class="r" style="left:955px;top:156px;width:60.5px;height:3.5px;background:#f0f0f0;border-radius:2px;"></div>
<div class="r" style="left:955px;top:159.5px;width:194px;height:1px;background:#2e2e2e;"></div>
<div class="t" style="left:963.70px;top:179.20px;font-size:10.76px;font-weight:700;color:#e4e4e4;transform:scaleX(0.973)">Halo Infinite</div>
<div class="t" style="left:963.70px;top:230.10px;font-size:10.76px;font-weight:700;color:#e4e4e4;transform:scaleX(0.985)">Forza Horizon 5</div>
<div class="t" style="left:963.70px;top:281.10px;font-size:10.76px;font-weight:700;color:#e4e4e4;transform:scaleX(0.973)">Minecraft</div>
<div class="t" style="left:963.70px;top:332.60px;font-size:10.76px;font-weight:700;color:#e4e4e4;transform:scaleX(0.972)">Fortnite</div>
<div class="t" style="left:963.70px;top:384.10px;font-size:10.76px;font-weight:700;color:#e4e4e4;transform:scaleX(0.961)">League of Legends</div>
<div class="t" style="left:963.70px;top:435.40px;font-size:10.76px;font-weight:700;color:#e4e4e4;transform:scaleX(0.957)">Genshin Impact</div>
<div class="r" style="left:954.5px;top:272px;width:2.2px;height:36px;background:#707848;"></div>
<div class="r" style="left:954.5px;top:320px;width:2.6px;height:37px;background:#66b4bc;"></div>
<div class="r" style="left:954.5px;top:428px;width:2.2px;height:28px;background:#98b8d8;"></div>
<div class="r" style="left:954.5px;top:220px;width:2px;height:34px;background:#6a7048;"></div>
</div></body></html>
